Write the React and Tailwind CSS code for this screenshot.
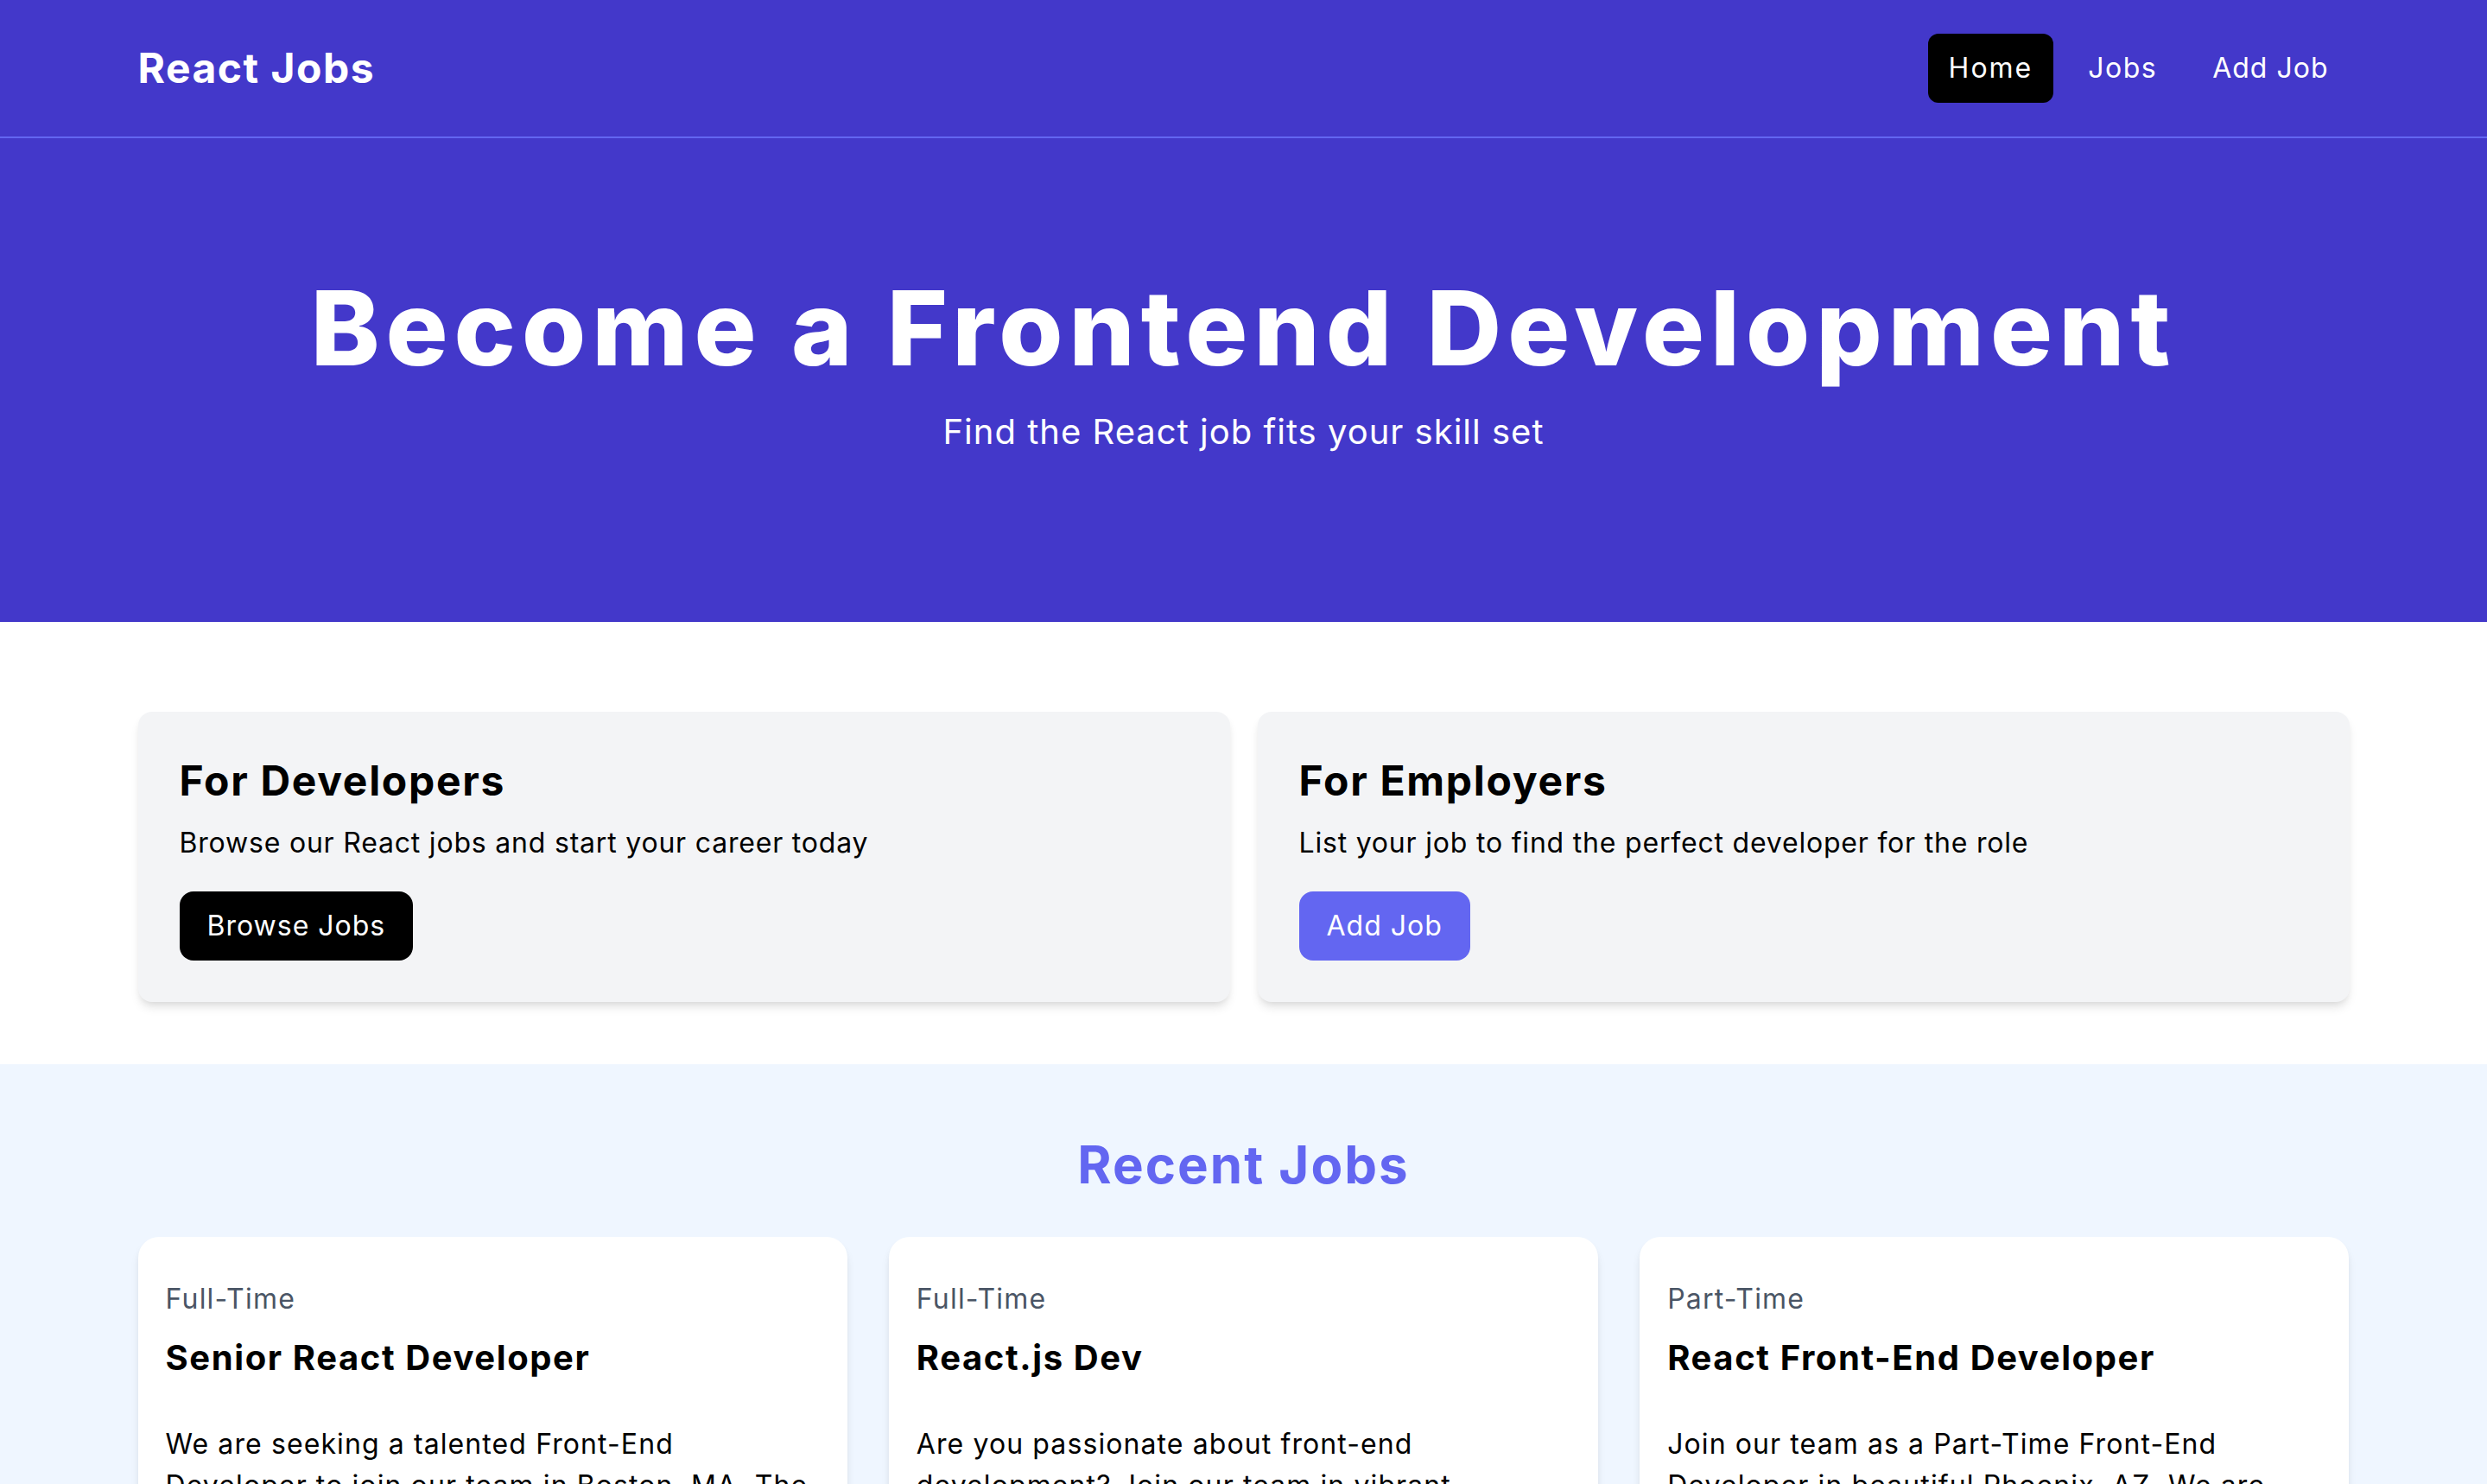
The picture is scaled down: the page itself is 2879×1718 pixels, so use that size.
import React from "react";

const shadow =
  "shadow-[0_8px_12px_-2px_rgba(0,0,0,0.1),0_4px_8px_-4px_rgba(0,0,0,0.1)]";

const jobs = [
  {
    type: "Full-Time",
    title: "Senior React Developer",
    lines: [
      "We are seeking a talented Front-End",
      "Developer to join our team in Boston, MA. The",
      "ideal ca...",
    ],
  },
  {
    type: "Full-Time",
    title: "React.js Dev",
    lines: [
      "Are you passionate about front-end",
      "development? Join our team in vibrant",
      "Miami, FL, and...",
    ],
  },
  {
    type: "Part-Time",
    title: "React Front-End Developer",
    lines: [
      "Join our team as a Part-Time Front-End",
      "Developer in beautiful Phoenix, AZ. We are",
      "looking for...",
    ],
  },
];

export default function App() {
  return (
    <div className="h-[1718px] overflow-hidden bg-white font-['Inter',sans-serif] text-black">
      <nav className="h-[160px] bg-[#4338ca] border-b-2 border-[#6366f1]">
        <div className="mx-auto w-[2560px] h-full flex items-center justify-between">
          <span className="text-white text-[48px] leading-[64px] font-bold tracking-[1.5px]">
            React Jobs
          </span>
          <div className="flex items-center gap-4">
            <a className="bg-black text-white rounded-[12px] px-6 py-4 text-[32px] leading-[48px] tracking-[2px]">
              Home
            </a>
            <a className="text-white rounded-[12px] px-6 py-4 text-[32px] leading-[48px] tracking-[1.5px]">
              Jobs
            </a>
            <a className="text-white rounded-[12px] px-6 py-4 text-[32px] leading-[48px] tracking-[1px]">
              Add Job
            </a>
          </div>
        </div>
      </nav>

      <section className="bg-[#4338ca] py-[160px] flex flex-col items-center">
        <h1 className="text-white text-[120px] leading-[120px] font-extrabold tracking-[7px]">
          Become a Frontend Development
        </h1>
        <p className="text-white text-[40px] leading-[56px] my-8 tracking-[1px]">
          Find the React job fits your skill set
        </p>
      </section>

      <section className="pt-[104px] pb-[72px]">
        <div className="mx-auto w-[2560px] grid grid-cols-2 gap-8">
          <div className={`bg-gray-100 p-12 rounded-2xl ${shadow}`}>
            <h2 className="text-[48px] leading-[64px] font-bold tracking-[1.7px]">
              For Developers
            </h2>
            <p className="mt-4 mb-8 text-[32px] leading-[48px] tracking-[0.8px]">
              Browse our React jobs and start your career today
            </p>
            <a className="inline-block bg-black text-white rounded-2xl px-8 py-4 text-[32px] leading-[48px] tracking-[1px]">
              Browse Jobs
            </a>
          </div>
          <div className={`bg-gray-100 p-12 rounded-2xl ${shadow}`}>
            <h2 className="text-[48px] leading-[64px] font-bold tracking-[1.7px]">
              For Employers
            </h2>
            <p className="mt-4 mb-8 text-[32px] leading-[48px] tracking-[0.8px]">
              List your job to find the perfect developer for the role
            </p>
            <a className="inline-block bg-[#6366f1] text-white rounded-2xl px-8 py-4 text-[32px] leading-[48px] tracking-[1px]">
              Add Job
            </a>
          </div>
        </div>
      </section>

      <section className="bg-blue-50 pt-20 pb-20">
        <h2 className="text-[60px] leading-[72px] font-bold text-[#6366f1] text-center mb-12 tracking-[2px]">
          Recent Jobs
        </h2>
        <div className="mx-auto w-[2560px] grid grid-cols-3 gap-12">
          {jobs.map((job) => (
            <div key={job.title} className={`bg-white rounded-3xl ${shadow}`}>
              <div className="p-8">
                <div className="mb-12">
                  <div className="text-gray-600 my-4 text-[32px] leading-[48px] tracking-[1.2px]">
                    {job.type}
                  </div>
                  <h3 className="text-[40px] leading-[56px] font-bold tracking-[1.6px]">
                    {job.title}
                  </h3>
                </div>
                <div className="mb-10 text-[32px] leading-[48px] tracking-[1.1px]">
                  {job.lines.map((l) => (
                    <span key={l} className="block whitespace-nowrap">
                      {l}
                    </span>
                  ))}
                </div>
              </div>
            </div>
          ))}
        </div>
      </section>
    </div>
  );
}
